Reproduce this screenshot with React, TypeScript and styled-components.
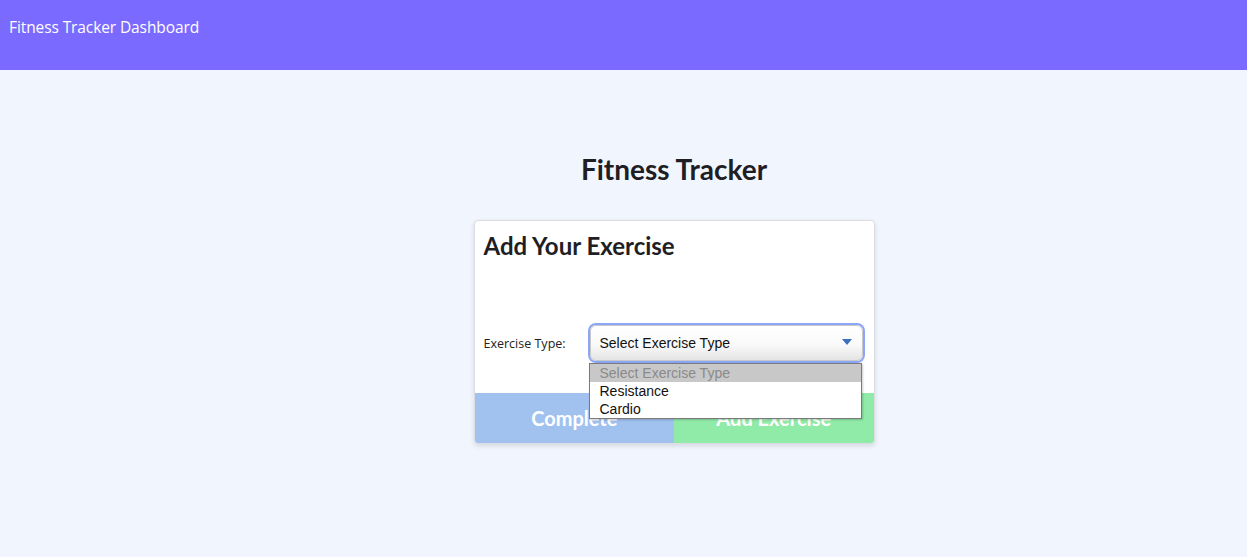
import React from "react";
import styled, { createGlobalStyle } from "styled-components";

const Global = createGlobalStyle`
  html, body { margin: 0; padding: 0; }
  body { background: #f1f6fe; font-family: "Open Sans", "Noto Sans", sans-serif; }
  * { box-sizing: border-box; }
`;

const Page = styled.div`
  min-height: 557px;
  background: #f1f6fe;
`;

const TopBar = styled.header`
  height: 70px;
  background: #7a6aff;
  color: #ffffff;
  padding: 16px 9px 0;
  font-family: "Open Sans", "Noto Sans", sans-serif;
  font-size: 15.5px;
  letter-spacing: -0.1px;
  line-height: 22px;
`;

const Main = styled.main`
  display: flex;
  flex-direction: column;
  align-items: center;
  padding: 82px 0 0 101px;
`;

const Title = styled.h1`
  margin: 0;
  font-family: Lato, sans-serif;
  font-weight: 700;
  font-size: 28px;
  line-height: 34px;
  color: #1e1e24;
`;

const Card = styled.section`
  margin-top: 34px;
  width: 401px;
  background: #ffffff;
  border: 1px solid #dcdde2;
  border-radius: 4px;
  box-shadow: 0 2px 5px rgba(0, 0, 0, 0.12);
  display: flex;
  flex-direction: column;
`;

const CardBody = styled.div`
  padding: 10px 10px 32px 9px;
  display: flex;
  flex-direction: column;
`;

const CardTitle = styled.h2`
  margin: 0;
  font-family: Lato, sans-serif;
  font-weight: 700;
  font-size: 24px;
  line-height: 29px;
  color: #1e1e24;
`;

const FormRow = styled.div`
  margin-top: 65px;
  display: flex;
  align-items: center;
  gap: 21px;
`;

const Label = styled.label`
  font-family: "Open Sans", "Noto Sans", sans-serif;
  font-size: 12.5px;
  color: #222;
  width: 85px;
`;

const SelectWrap = styled.div`
  position: relative;
  flex: 1;
  margin-right: 1px;
`;

const SelectBox = styled.div`
  height: 36px;
  border-radius: 6px;
  border: 1px solid #c8c8c8;
  box-shadow: 0 0 0 2px #8ba5f7;
  background: linear-gradient(#ffffff 0%, #fafafa 55%, #e4e4e4 100%);
  display: flex;
  align-items: center;
  justify-content: space-between;
  padding: 0 10px 0 9px;
  font-family: "Liberation Sans", Arial, sans-serif;
  font-size: 14px;
  color: #111;
`;

const Arrow = styled.svg`
  width: 10px;
  height: 6px;
  margin-top: -2px;
`;

const ListBox = styled.ul`
  position: absolute;
  left: -1px;
  top: calc(100% + 2px);
  width: 273px;
  margin: 0;
  padding: 0;
  list-style: none;
  background: #ffffff;
  border: 1px solid #7a7a7a;
  box-shadow: 1px 1px 2px rgba(0, 0, 0, 0.2);
  z-index: 5;
`;

const Option = styled.li<{ $active?: boolean }>`
  height: 18px;
  line-height: 18px;
  padding-left: 10px;
  font-family: "Liberation Sans", Arial, sans-serif;
  font-size: 14px;
  color: ${(p) => (p.$active ? "#8a8a8a" : "#111")};
  background: ${(p) => (p.$active ? "#c8c8c8" : "#ffffff")};
`;

const Buttons = styled.div`
  display: grid;
  grid-template-columns: 1fr 1fr;
  height: 50px;
`;

const ActionButton = styled.button<{ $color: string; $side: "left" | "right" }>`
  border: none;
  margin: 0;
  background: ${(p) => p.$color};
  color: #ffffff;
  font-family: Lato, sans-serif;
  font-weight: 700;
  font-size: 20px;
  border-bottom-left-radius: ${(p) => (p.$side === "left" ? "3px" : "0")};
  border-bottom-right-radius: ${(p) => (p.$side === "right" ? "3px" : "0")};
  padding: 0;
  cursor: pointer;
`;

export default function App() {
  return (
    <Page>
      <Global />
      <TopBar>Fitness Tracker Dashboard</TopBar>
      <Main>
        <Title>Fitness Tracker</Title>
        <Card>
          <CardBody>
            <CardTitle>Add Your Exercise</CardTitle>
            <FormRow>
              <Label>Exercise Type:</Label>
              <SelectWrap>
                <SelectBox>
                  <span>Select Exercise Type</span>
                  <Arrow viewBox="0 0 10 6">
                    <path d="M0 0 L10 0 L5 6 Z" fill="#3b6fc2" />
                  </Arrow>
                </SelectBox>
                <ListBox>
                  <Option $active>Select Exercise Type</Option>
                  <Option>Resistance</Option>
                  <Option>Cardio</Option>
                </ListBox>
              </SelectWrap>
            </FormRow>
          </CardBody>
          <Buttons>
            <ActionButton $color="#a1c1ef" $side="left">Complete</ActionButton>
            <ActionButton $color="#91eba8" $side="right">Add Exercise</ActionButton>
          </Buttons>
        </Card>
      </Main>
    </Page>
  );
}
